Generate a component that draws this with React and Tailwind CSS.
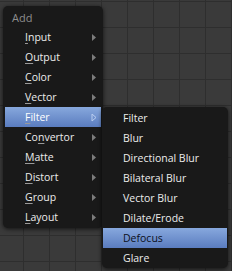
import React from 'react';

const addItems = [
  { pre: '', key: 'I', post: 'nput' },
  { pre: '', key: 'O', post: 'utput' },
  { pre: '', key: 'C', post: 'olor' },
  { pre: '', key: 'V', post: 'ector' },
  { pre: '', key: 'F', post: 'ilter', open: true },
  { pre: 'Co', key: 'n', post: 'vertor' },
  { pre: '', key: 'M', post: 'atte' },
  { pre: '', key: 'D', post: 'istort' },
  { pre: '', key: 'G', post: 'roup' },
  { pre: '', key: 'L', post: 'ayout' },
];

const filterItems = [
  'Filter',
  'Blur',
  'Directional Blur',
  'Bilateral Blur',
  'Vector Blur',
  'Dilate/Erode',
  'Defocus',
  'Glare',
];

function Arrow({ hollow }) {
  return (
    <svg width="6" height="9" viewBox="0 0 6 9" className="shrink-0">
      {hollow ? (
        <path d="M1 1 L5 4.5 L1 8 Z" fill="none" stroke="#b9cdf0" strokeWidth="1" />
      ) : (
        <path d="M1 1 L5 4.5 L1 8 Z" fill="#7c7c7c" />
      )}
    </svg>
  );
}

export default function App() {
  return (
    <div
      className="relative w-[232px] h-[271px] overflow-hidden bg-[#3a3a3a] bg-[linear-gradient(to_right,#2e2e2e_1px,transparent_1px),linear-gradient(to_bottom,#2e2e2e_1px,transparent_1px)] bg-[size:26px_26px] bg-[position:23px_1px] text-[10.5px] leading-none"
      style={{ fontFamily: '"Open Sans", "Noto Sans", sans-serif' }}
    >
      {/* Add menu */}
      <div className="absolute left-[3px] top-[6px] w-[100px] h-[222px] rounded-[5px] bg-[#191919] shadow-[0_1px_4px_rgba(0,0,0,0.7)] px-[2px]">
        <div className="h-[21px] flex items-center pl-[7px] pt-[1px] text-[#8e8e8e] text-[11px]">Add</div>
        {addItems.map((it, i) => (
          <div
            key={i}
            className={
              'h-[20px] flex items-center justify-between pl-[20px] pr-[4px] pt-[1px] ' +
              (it.open
                ? 'bg-[linear-gradient(to_bottom,#87a8dd,#5a7cbf)] text-white'
                : 'text-[#ececec]')
            }
          >
            <span>
              {it.pre}
              <span className="underline decoration-[#9a9a9a] underline-offset-[2px]">{it.key}</span>
              {it.post}
            </span>
            <Arrow hollow={it.open} />
          </div>
        ))}
      </div>

      {/* Filter submenu */}
      <div className="absolute left-[102px] top-[107px] w-[126px] h-[161px] rounded-[5px] bg-[#191919] shadow-[0_1px_4px_rgba(0,0,0,0.7)] px-[1px] pt-[1px]">
        {filterItems.map((name) => (
          <div
            key={name}
            className={
              'h-[20px] flex items-center pl-[20px] pt-[1px] ' +
              (name === 'Defocus'
                ? 'bg-[linear-gradient(to_bottom,#87a8dd,#5a7cbf)] text-[#0c1020]'
                : 'text-[#ececec]')
            }
          >
            {name}
          </div>
        ))}
      </div>
    </div>
  );
}
